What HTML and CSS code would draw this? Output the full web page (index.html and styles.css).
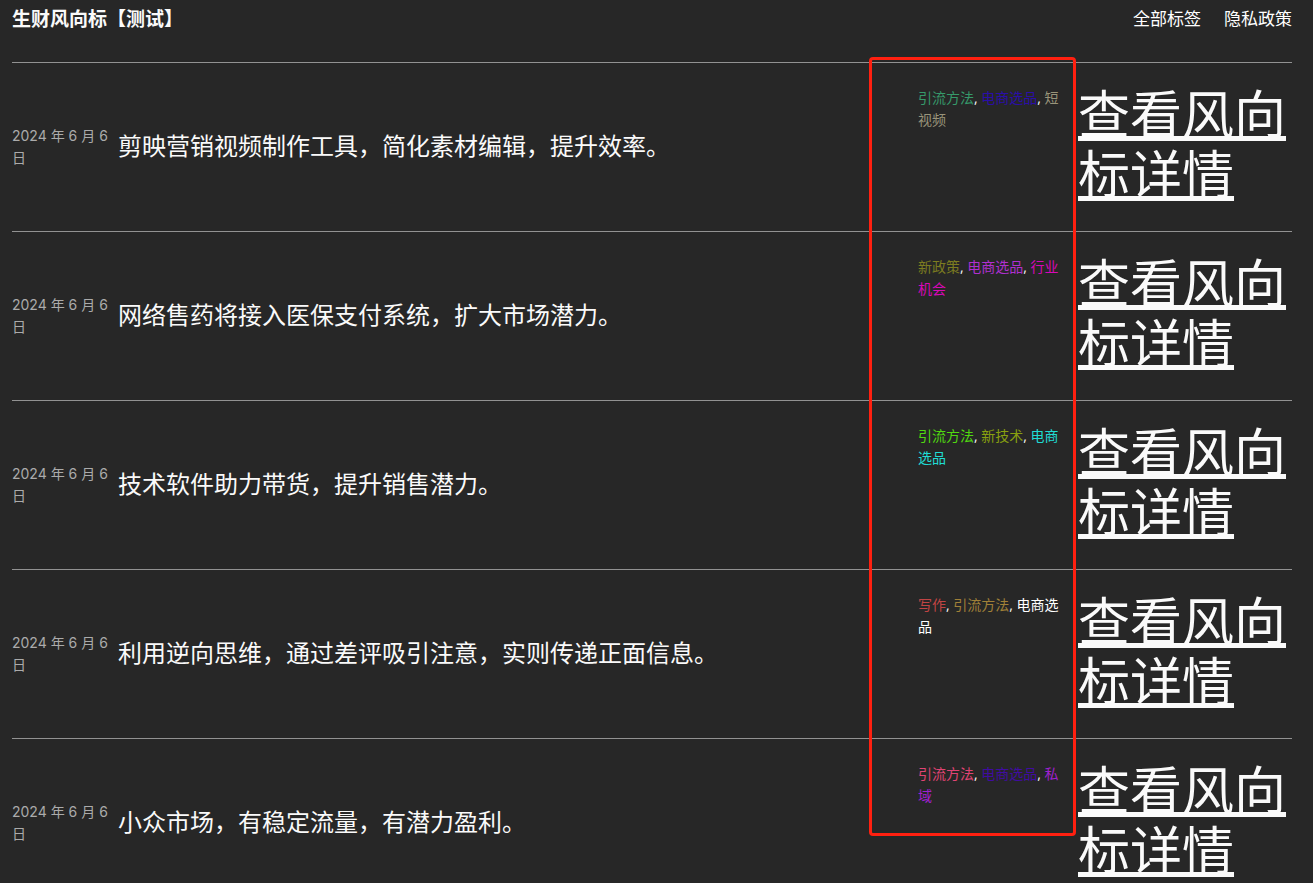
FILE: index.html
```html
<!DOCTYPE html>
<html lang="zh-CN">
<head>
<meta charset="utf-8">
<meta name="viewport" content="width=device-width, initial-scale=1">
<title>生财风向标【测试】</title>
<link rel="stylesheet" href="styles.css">
</head>
<body>
<header class="site-header">
  <h1 class="site-title">生财风向标【测试】</h1>
  <nav class="site-nav">
    <a href="#tags">全部标签</a>
    <a href="#privacy">隐私政策</a>
  </nav>
</header>
<main class="posts">
  <article class="post">
    <time class="post-date" datetime="2024-06-06">2024 年 6 月 6 日</time>
    <h2 class="post-title">剪映营销视频制作工具，简化素材编辑，提升效率。</h2>
    <p class="post-tags"><a class="green" href="#t1">引流方法</a>, <a class="indigo" href="#t2">电商选品</a>, <a class="khaki" href="#t3">短视频</a></p>
    <a class="post-link" href="#p1">查看风向标详情</a>
  </article>
  <article class="post">
    <time class="post-date" datetime="2024-06-06">2024 年 6 月 6 日</time>
    <h2 class="post-title">网络售药将接入医保支付系统，扩大市场潜力。</h2>
    <p class="post-tags"><a class="olive" href="#t4">新政策</a>, <a class="violet" href="#t2">电商选品</a>, <a class="magenta" href="#t5">行业机会</a></p>
    <a class="post-link" href="#p2">查看风向标详情</a>
  </article>
  <article class="post">
    <time class="post-date" datetime="2024-06-06">2024 年 6 月 6 日</time>
    <h2 class="post-title">技术软件助力带货，提升销售潜力。</h2>
    <p class="post-tags"><a class="lime" href="#t1">引流方法</a>, <a class="moss" href="#t6">新技术</a>, <a class="cyan" href="#t2">电商选品</a></p>
    <a class="post-link" href="#p3">查看风向标详情</a>
  </article>
  <article class="post">
    <time class="post-date" datetime="2024-06-06">2024 年 6 月 6 日</time>
    <h2 class="post-title">利用逆向思维，通过差评吸引注意，实则传递正面信息。</h2>
    <p class="post-tags"><a class="red" href="#t7">写作</a>, <a class="gold" href="#t1">引流方法</a>, <a class="white" href="#t2">电商选品</a></p>
    <a class="post-link" href="#p4">查看风向标详情</a>
  </article>
  <article class="post">
    <time class="post-date" datetime="2024-06-06">2024 年 6 月 6 日</time>
    <h2 class="post-title">小众市场，有稳定流量，有潜力盈利。</h2>
    <p class="post-tags"><a class="pink" href="#t1">引流方法</a>, <a class="purple" href="#t2">电商选品</a>, <a class="orchid" href="#t8">私域</a></p>
    <a class="post-link" href="#p5">查看风向标详情</a>
  </article>
  <div class="highlight" aria-hidden="true"></div>
</main>
</body>
</html>
```
FILE: styles.css
```css
* {
  box-sizing: border-box;
}

body {
  margin: 0;
  padding: 0 21px 0 12px;
  background: #272727;
  color: #fafafa;
  font-family: "Open Sans", "Noto Sans CJK SC", sans-serif;
}

.site-header {
  display: flex;
  justify-content: space-between;
  align-items: flex-start;
  padding: 4px 0 28px;
  line-height: 30px;
}

.site-title {
  margin: 0;
  font-size: 19px;
  font-weight: 700;
}

.site-nav {
  display: flex;
  gap: 23px;
  font-size: 17px;
}

.site-nav a {
  color: #fff;
  text-decoration: none;
}

.posts {
  position: relative;
}

.post {
  display: grid;
  grid-template-columns: 100px 1fr 160px 214px;
  align-items: start;
  border-top: 1px solid #929292;
}

.post-date {
  align-self: center;
  color: #ababab;
  font-family: Inter, "Noto Sans CJK SC", sans-serif;
  font-size: 14px;
  line-height: 22px;
}

.post-title {
  align-self: center;
  margin: 0;
  padding: 0 6px 2px;
  font-size: 24px;
  font-weight: 400;
  line-height: 36px;
}

.post-tags {
  margin: 0;
  padding: 24px 10px 24px 0;
  font-size: 14px;
  line-height: 22px;
}

.post-tags a {
  text-decoration: none;
}

.post-link {
  padding: 21px 0 27px;
  color: #fafafa;
  font-size: 52px;
  line-height: 60px;
  text-decoration: underline;
  text-decoration-thickness: 5px;
  text-decoration-skip-ink: none;
  text-underline-offset: 2px;
}

.green { color: #36996a; }
.indigo { color: #2a0ea8; }
.khaki { color: #99947a; }
.olive { color: #7c7c20; }
.violet { color: #b030d0; }
.magenta { color: #d808b8; }
.lime { color: #50d810; }
.moss { color: #88a010; }
.cyan { color: #20dcd4; }
.red { color: #c04444; }
.gold { color: #a08038; }
.white { color: #fff; }
.pink { color: #e04474; }
.purple { color: #400ca0; }
.orchid { color: #a020d0; }

.highlight {
  position: absolute;
  top: -5px;
  right: 216px;
  width: 207px;
  height: 779px;
  border: 3px solid #ff2010;
  border-radius: 4px;
  pointer-events: none;
}
```
